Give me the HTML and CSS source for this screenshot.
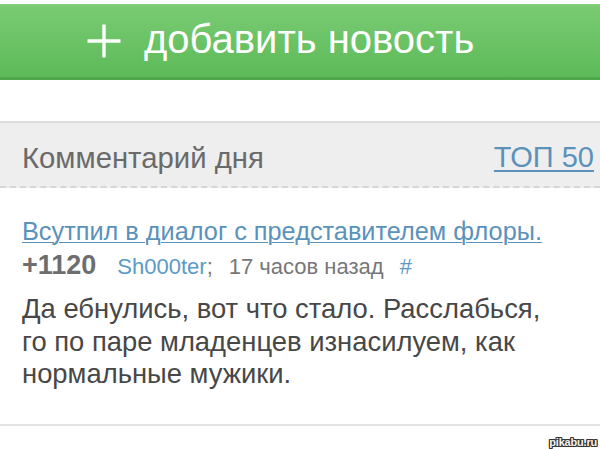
FILE: index.html
```html
<!DOCTYPE html>
<html lang="ru">
<head>
<meta charset="utf-8">
<title>Комментарий дня</title>
<link rel="stylesheet" href="styles.css">
</head>
<body>
<div class="page">
  <a class="add-btn" href="#">
    <svg class="plus" width="34" height="34" viewBox="0 0 34 34" aria-hidden="true">
      <path d="M17 0.5V33.5M0.5 17H33.5" stroke="#ffffff" stroke-width="3.4" fill="none"/>
    </svg>
    <span class="add-label">добавить новость</span>
  </a>

  <section class="cotd">
    <header class="cotd-head">
      <span class="cotd-title">Комментарий дня</span>
      <a class="top50" href="#">ТОП 50</a>
    </header>
    <div class="cotd-body">
      <a class="post-link" href="#">Всутпил в диалог с представителем флоры.</a>
      <div class="meta">
        <span class="rating">+1120</span><a class="author" href="#">Sh000ter</a><span class="sep">;</span><span class="time">17 часов назад</span><a class="hash" href="#">#</a>
      </div>
      <p class="comment">Да ебнулись, вот что стало. Расслабься, го по паре младенцев изнасилуем, как нормальные мужики.</p>
    </div>
  </section>

  <div class="watermark">pikabu.ru</div>
</div>
</body>
</html>
```

FILE: styles.css
```css
html, body {
  margin: 0;
  padding: 0;
  background: #ffffff;
}

body {
  font-family: "Liberation Sans", Arial, Helvetica, sans-serif;
  width: 600px;
  height: 449px;
  overflow: hidden;
}

.page {
  position: relative;
  width: 600px;
  height: 449px;
}

a {
  text-decoration: none;
}

/* green button */
.add-btn {
  margin-top: 4px;
  border-top: 1px solid #86d280;
  border-bottom: 3px solid #4fa64b;
  background: linear-gradient(to bottom, #7acb73 0%, #6bc366 50%, #5dba58 100%);
  display: flex;
  align-items: center;
  padding: 0 0 4px 87px;
  box-sizing: border-box;
  height: 76px;
  color: #ffffff;
}

.plus {
  display: block;
  flex: none;
  margin-top: 4px;
}

.add-label {
  font-size: 40px;
  line-height: 1;
  margin-left: 23px;
  color: #ffffff;
}

/* comment of the day */
.cotd {
  margin-top: 41px;
  border-bottom: 2px solid #e3e3e3;
  padding-bottom: 33px;
}

.cotd-head {
  border-top: 2px solid #dddddd;
  border-bottom: 2px dashed #d6d6d6;
  background: #eeeeee;
  box-sizing: border-box;
  padding: 6px 6px 0 22px;
  display: flex;
  align-items: center;
  justify-content: space-between;
  height: 67px;
}

.cotd-title {
  font-size: 29.3px;
  line-height: 1;
  color: #6a6a6a;
}

.top50 {
  font-size: 29px;
  line-height: 1;
  color: #5a92bb;
  text-decoration: underline;
  text-underline-offset: 3px;
}

.cotd-body {
  padding: 28px 22px 0 22px;
}

.post-link {
  display: block;
  font-size: 25.3px;
  line-height: 30px;
  color: #5a92bb;
  text-decoration: underline;
  text-decoration-thickness: 1px;
  text-underline-offset: 2px;
  white-space: nowrap;
}

.meta {
  margin-top: 2px;
  font-size: 22px;
  line-height: 35px;
  color: #777777;
  white-space: nowrap;
}

.rating {
  font-size: 27px;
  font-weight: bold;
  color: #6e6e6e;
}

.author {
  margin-left: 21px;
  color: #5b9ac6;
}

.sep {
  color: #777777;
}

.time {
  margin-left: 16px;
  color: #777777;
}

.hash {
  margin-left: 16px;
  color: #5b9ac6;
}

.comment {
  margin: 9px 0 0 0;
  max-width: 535px;
  font-size: 27.4px;
  line-height: 32.5px;
  color: #474747;
}

.watermark {
  position: absolute;
  right: 3px;
  top: 431px;
  font-size: 11px;
  font-weight: bold;
  line-height: 14px;
  color: #f4f4f4;
  letter-spacing: -0.2px;
  text-shadow:
    1px 0 0 #333, -1px 0 0 #333, 0 1px 0 #333, 0 -1px 0 #333,
    1px 1px 0 #333, -1px -1px 0 #333, 1px -1px 0 #333, -1px 1px 0 #333;
}
```
